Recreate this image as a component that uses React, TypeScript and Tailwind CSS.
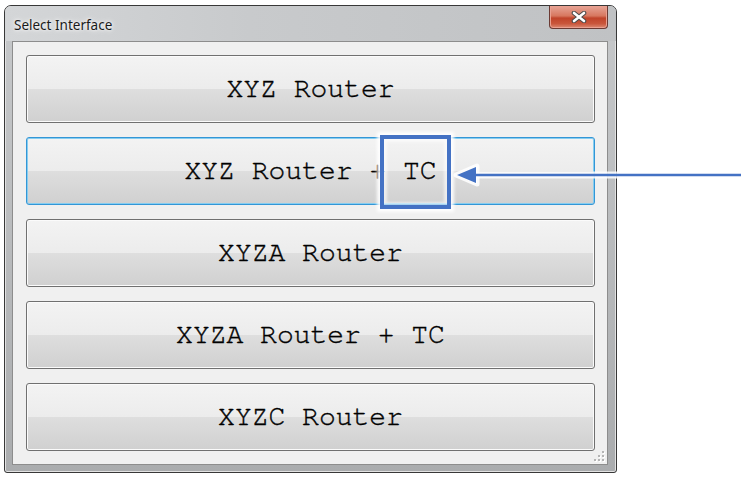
import React from "react";

const items = [
  "XYZ Router",
  "XYZ Router + TC",
  "XYZA Router",
  "XYZA Router + TC",
  "XYZC Router",
];

function CloseGlyph() {
  return (
    <svg width="16" height="12" viewBox="0 0 16 12">
      <path d="M3 2 L13 10 M13 2 L3 10" stroke="#4a4a4a" strokeWidth="4.6" strokeLinecap="round" />
      <path d="M3 2 L13 10 M13 2 L3 10" stroke="#ffffff" strokeWidth="2.6" strokeLinecap="round" />
    </svg>
  );
}

function Grip() {
  const dots = [
    [8, 0],
    [4, 4],
    [8, 4],
    [0, 8],
    [4, 8],
    [8, 8],
  ];
  return (
    <svg width="11" height="11" viewBox="0 0 11 11" className="absolute right-[2px] bottom-[2px]">
      {dots.map(([x, y], i) => (
        <g key={i}>
          <rect x={x + 1} y={y + 1} width="2" height="2" fill="#ffffff" />
          <rect x={x} y={y} width="2" height="2" fill="#b4b4b4" />
        </g>
      ))}
    </svg>
  );
}

export default function App() {
  return (
    <div className="relative w-[741px] h-[479px] bg-white overflow-hidden">
      <div className="pl-[4px] pt-[5px]">
        {/* window */}
        <div className="w-[613px] h-[468px] flex flex-col border border-[#383838] rounded-t-[7px] rounded-b-[3px] bg-[linear-gradient(to_bottom,#c6c8ca_0%,#bfc1c3_30%,#aaacae_100%)] shadow-[inset_0_0_0_1px_#e2e2e2]">
          <div className="h-[35px] flex items-start bg-[linear-gradient(to_right,#d4d6d8_0%,#c8cacc_40%,#c0c2c4_100%)] rounded-t-[6px]">
            <div
              className="self-center pt-[4px] pl-[9px] text-[13.5px] text-[#1a1a1a] [text-shadow:0_0_6px_#ffffff,0_0_3px_#ffffff]"
              style={{ fontFamily: '"Noto Sans", "Liberation Sans", Arial, sans-serif' }}
            >
              Select Interface
            </div>
            <div className="ml-auto mr-[8px] w-[59px] h-[23px] flex items-center justify-center rounded-b-[4px] border border-t-0 border-[#6b3a33] bg-[linear-gradient(to_bottom,#e7a597_0%,#d7775f_45%,#c0432a_55%,#c9563b_80%,#dc8a72_100%)] shadow-[inset_0_0_0_1px_#eaa090]">
              <CloseGlyph />
            </div>
          </div>
          <div className="flex-1 ml-[7px] mr-[8px] mb-[7px] relative border border-[#8d8d8d] bg-[#f0f0f0] flex flex-col gap-[14px] pl-[13px] pr-[12px] pt-[13px] pb-[12px]">
            {items.map((label, i) => (
              <button
                key={label}
                className={
                  i === 1
                    ? "h-[68px] w-full rounded-[3px] border border-[#3396d6] shadow-[inset_0_0_0_1px_#86cdf0] bg-[linear-gradient(to_bottom,#f3f3f3_0%,#ececec_50%,#dedede_50%,#d0d0d0_100%)] text-black text-[28px] [-webkit-text-stroke:0.4px_#000]"
                    : "h-[68px] w-full rounded-[3px] border border-[#707070] shadow-[inset_0_0_0_1px_#fbfbfb] bg-[linear-gradient(to_bottom,#f3f3f3_0%,#ececec_50%,#dedede_50%,#d0d0d0_100%)] text-black text-[28px] [-webkit-text-stroke:0.4px_#000]"
                }
                style={{
                  fontFamily:
                    '"Nimbus Mono PS", "Nimbus Mono L", "FreeMono", "Courier 10 Pitch", "Courier New", "Liberation Mono", monospace',
                }}
              >
                {label}
              </button>
            ))}
            <Grip />
          </div>
        </div>
      </div>

      {/* highlight box */}
      <div className="absolute left-[380px] top-[135px] w-[71px] h-[74px] border-[4px] border-[#4472c4] shadow-[0_0_3px_3px_rgba(255,255,255,0.9),inset_0_0_3px_3px_rgba(255,255,255,0.6)]" />

      {/* arrow */}
      <svg className="absolute left-[452px] top-[163px]" width="289" height="24" viewBox="0 0 289 24">
        <path d="M20 12 L289 12" stroke="#ffffff" strokeWidth="7" strokeOpacity="0.85" />
        <path d="M4 12 L25 3 L25 21 Z" fill="#ffffff" stroke="#ffffff" strokeWidth="5" strokeLinejoin="round" strokeOpacity="0.85" />
        <path d="M20 12 L289 12" stroke="#4472c4" strokeWidth="2.5" />
        <path d="M5 12 L24 4 L24 20 Z" fill="#4472c4" />
      </svg>
    </div>
  );
}
